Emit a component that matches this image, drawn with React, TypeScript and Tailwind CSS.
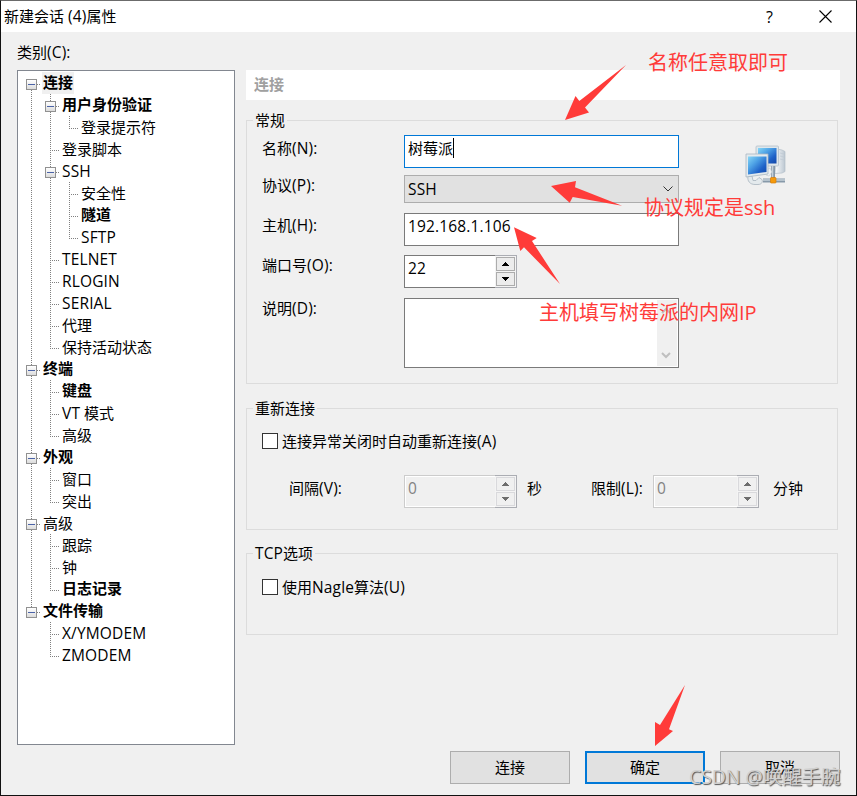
import type { ReactNode } from "react";

type Node = { label: string; bold?: boolean; selected?: boolean; children?: Node[] };

const TREE: Node[] = [
  {
    label: "连接",
    bold: true,
    selected: true,
    children: [
      { label: "用户身份验证", bold: true, children: [{ label: "登录提示符" }] },
      { label: "登录脚本" },
      { label: "SSH", children: [{ label: "安全性" }, { label: "隧道", bold: true }, { label: "SFTP" }] },
      { label: "TELNET" },
      { label: "RLOGIN" },
      { label: "SERIAL" },
      { label: "代理" },
      { label: "保持活动状态" },
    ],
  },
  { label: "终端", bold: true, children: [{ label: "键盘", bold: true }, { label: "VT 模式" }, { label: "高级" }] },
  { label: "外观", bold: true, children: [{ label: "窗口" }, { label: "突出" }] },
  { label: "高级", children: [{ label: "跟踪" }, { label: "钟" }, { label: "日志记录", bold: true }] },
  { label: "文件传输", bold: true, children: [{ label: "X/YMODEM" }, { label: "ZMODEM" }] },
];

type Row = { node: Node; depth: number; last: boolean; first: boolean; rails: boolean[] };

function flatten(nodes: Node[], depth = 0, rails: boolean[] = []): Row[] {
  return nodes.flatMap((node, i) => {
    const last = i === nodes.length - 1;
    const row: Row = { node, depth, last, first: depth === 0 && i === 0, rails };
    return [row, ...flatten(node.children ?? [], depth + 1, [...rails, !last])];
  });
}

/** Sets Latin runs slightly larger while leaving Chinese runs at their natural pitch. */
function Mixed({ children }: { children: string }) {
  return (
    <>
      {children.split(/([\x21-\x7e]+)/).map((run, i) =>
        i % 2 ? (
          <span key={i} className="text-[15.500px] tracking-[.15px]">
            {run}
          </span>
        ) : (
          run
        ),
      )}
    </>
  );
}

function Guides({ row }: { row: Row }) {
  const x = 13.5 + 19 * row.depth;
  const width = 24 + 19 * row.depth;
  return (
    <svg className="shrink-0" width={width} height="22" shapeRendering="crispEdges">
      <defs>
        <linearGradient id="tog" x1="0" y1="0" x2="0" y2="1">
          <stop offset="0" stopColor="#fff" />
          <stop offset="1" stopColor="#dcdcdc" />
        </linearGradient>
      </defs>
      <g stroke="#808080" strokeDasharray="1 1">
        {row.rails.map((on, k) => on && <path key={k} d={`M${13.5 + 19 * k} 0V22`} />)}
        <path d={`M${x} ${row.first ? 12 : 0}V${row.last ? 13 : 22}`} />
        <path d={`M${x - 0.5} 12.5H${width - 1}`} />
      </g>
      {row.node.children && (
        <g>
          <rect x={x - 5.5} y="7" width="11" height="11" rx="1" fill="#919191" />
          <rect x={x - 4.5} y="8" width="9" height="9" fill="url(#tog)" />
          <path d={`M${x - 3.5} 12.5h7`} stroke="#4b63a7" />
        </g>
      )}
    </svg>
  );
}

function Group({ title, className, children }: { title: string; className: string; children: ReactNode }) {
  return (
    <section className={`w-[592px] border border-[#dcdcdc] ${className}`}>
      <div className="-mt-[11px] ml-1.5 h-5 w-fit bg-[#f0f0f0] px-0.5 leading-5">
        <Mixed>{title}</Mixed>
      </div>
      {children}
    </section>
  );
}

function Spinner({ value, width, disabled }: { value: string; width: string; disabled?: boolean }) {
  const btn = disabled ? "border-[#d9d9dc] bg-[#f0f0f0]" : "border-[#acacac] bg-[#ececec]";
  const fill = disabled ? "#6d6d6d" : "#000";
  return (
    <div className={`flex h-[33px] ${width}`}>
      <div
        className={`flex-1 border border-r-0 pl-[3px] leading-6 ${
          disabled ? "border-[#cccccc] bg-[#f0f0f0] text-[#838383] shadow-[inset_1px_1px_0_#fff,inset_0_-1px_0_#fff]" : "border-[#7a7a7a] bg-white"
        }`}
      >
        <Mixed>{value}</Mixed>
      </div>
      <div className="flex w-[22px] flex-col gap-px border border-l-0 border-[#abadb3] bg-[#f4f4f4] py-px pr-px pl-px">
        <div className={`flex h-[14px] items-center justify-center border ${btn}`}>
          <svg width="7" height="4" shapeRendering="crispEdges">
            <path d="M3 0h1v1h1v1h1v1h1v1H0V3h1V2h1V1h1z" fill={fill} />
          </svg>
        </div>
        <div className={`flex h-[14px] items-center justify-center border ${btn}`}>
          <svg width="7" height="4" shapeRendering="crispEdges">
            <path d="M0 0h7v1H6v1H5v1H4v1H3V3H2V2H1V1H0z" fill={fill} />
          </svg>
        </div>
      </div>
    </div>
  );
}

function Field({ label, className, pad, children }: { label: string; className: string; pad: string; children: ReactNode }) {
  return (
    <div className={`flex items-start ${className}`}>
      <div className={`w-[142px] ${pad}`}>
        <Mixed>{label}</Mixed>
      </div>
      {children}
    </div>
  );
}

function Check({ children }: { children: string }) {
  return (
    <div className="flex h-4 items-center gap-1 pl-[15px]">
      <span className="size-4 border border-[#333] bg-white" />
      <span className="leading-5">
        <Mixed>{children}</Mixed>
      </span>
    </div>
  );
}

function NetworkIcon() {
  return (
    <svg width="42" height="42" viewBox="0 0 42 42">
      <defs>
        <linearGradient id="scr" x1="0" y1="0" x2="1" y2="1">
          <stop offset="0" stopColor="#86d6f5" />
          <stop offset=".35" stopColor="#4fa3e6" />
          <stop offset=".7" stopColor="#1f62c8" />
          <stop offset="1" stopColor="#1247a8" />
        </linearGradient>
        <linearGradient id="tower" x1="0" y1="0" x2="1" y2="0">
          <stop offset="0" stopColor="#fbfcfd" />
          <stop offset="1" stopColor="#bcc7d1" />
        </linearGradient>
      </defs>
      <path d="M32 4l5 1 3 1.500v20l-3 1.500-7 .5z" fill="url(#tower)" stroke="#b3bec8" strokeWidth=".7" />
      <path d="M35 8l4 1M35 11l4 1M35 14l4 1" stroke="#c0cad3" strokeWidth=".8" />
      <rect x="11" y="1" width="22.500" height="20" rx="1" fill="#dfe7ec" stroke="#b3bfc9" strokeWidth=".8" />
      <rect x="13" y="3" width="18.500" height="15.500" fill="url(#scr)" />
      <path d="M3 31c-1 5 2 8.500 7 8.500h3c4 0 5-3 4-5l-3-2-3 3H8l-1-4.500z" fill="#e4eaed" stroke="#a8b4be" strokeWidth=".8" />
      <path d="M18 35.500h22M28 21v14" stroke="#8799a9" strokeWidth="4" />
      <path d="M18 35h22M27.500 21v13" stroke="#c6d1d9" strokeWidth="1.600" />
      <path d="M21 25l4-2 2 4-3 4-3-1z" fill="#edf1f3" stroke="#b6c1ca" strokeWidth=".5" />
      <path d="M1 9h22v20L1 32z" fill="#e3eaee" stroke="#a9b6c1" strokeWidth=".8" />
      <path d="M3 11.500h18.500v15.500L3 29.500z" fill="url(#scr)" />
      <rect x="25.500" y="32.500" width="5.500" height="5.500" rx=".8" fill="#f59a0b" stroke="#d57b08" strokeWidth=".7" />
    </svg>
  );
}

export default function App() {
  return (
    <div className="relative flex h-[796px] w-[857px] flex-col overflow-hidden border border-[#111] border-t-[#6b6b6b] bg-[#f0f0f0] font-['Open_Sans','Noto_Sans_CJK_SC',sans-serif] text-[15px] text-black">
      <header className="flex h-[31px] shrink-0 items-center bg-white pl-[3px]">
        <span className="flex-1">
          <Mixed>新建会话 (4)属性</Mixed>
        </span>
        <span className="mr-[46px] text-[16px]">?</span>
        <svg className="mr-[24px]" width="13" height="13">
          <path d="M.5.5l12 12M12.500.5l-12 12" stroke="#000" strokeWidth="1.100" />
        </svg>
      </header>

      <div className="flex h-[713px] shrink-0 pl-4">
        <aside className="w-[218px]">
          <div className="h-[38px] pt-2.5 leading-5">
            <Mixed>类别(C):</Mixed>
          </div>
          <div className="h-[675px] border border-[#828790] bg-white pt-px">
            {flatten(TREE).map((row, i) => (
              <div key={i} className="flex h-[22px]">
                <Guides row={row} />
                <span
                  className={`h-[22px] px-px whitespace-nowrap ${row.node.bold ? "font-bold" : ""} ${
                    row.node.selected ? "bg-[#f0f0f0] leading-5" : row.node.bold ? "leading-[21px]" : "leading-[22px]"
                  }`}
                >
                  <Mixed>{row.node.label}</Mixed>
                </span>
              </div>
            ))}
          </div>
        </aside>

        <main className="ml-[11px] w-[594px] pt-[38px]">
          <div className="h-[30px] bg-white pl-2 leading-[29px] font-bold text-[#a0a0a0]">连接</div>

          <Group title="常规" className="mt-5 h-[264px]">
            <div className="flex">
              <div className="pl-[15px] leading-5">
                <Field label="名称(N):" className="mt-[5px]" pad="pt-[3px]">
                  <div className="flex h-[33px] w-[275px] border border-[#0078d7] bg-white pt-0.5 pl-[3px]">
                    树莓派
                    <span className="h-5 w-px bg-black" />
                  </div>
                </Field>
                <Field label="协议(P):" className="mt-[7px]" pad="pt-0">
                  <div className="flex h-7 w-[275px] items-center justify-between border border-[#adadad] bg-[#e1e1e1] pr-[5px] pl-[3px]">
                    <span>
                      <Mixed>SSH</Mixed>
                    </span>
                    <svg width="10" height="6">
                      <path d="M.5.5L5 5 9.500.5" fill="none" stroke="#333" />
                    </svg>
                  </div>
                </Field>
                <Field label="主机(H):" className="mt-2.5" pad="pt-0.5">
                  <div className="h-[33px] w-[275px] border border-[#7a7a7a] bg-white pl-[3px] leading-6">
                    <Mixed>192.168.1.106</Mixed>
                  </div>
                </Field>
                <Field label="端口号(O):" className="mt-[9px]" pad="pt-0">
                  <Spinner value="22" width="w-[113px]" />
                </Field>
                <Field label="说明(D):" className="mt-2.5" pad="pt-0">
                  <div className="flex h-[70px] w-[275px] justify-end border border-[#7a7a7a] bg-white p-px">
                    <div className="flex w-5 flex-col items-center justify-between bg-[#f0f0f0] py-[7px] pr-0.5">
                      <svg width="10" height="7">
                        <path d="M1 6l4-4 4 4" fill="none" stroke="#bfbfbf" strokeWidth="2" />
                      </svg>
                      <svg width="10" height="7">
                        <path d="M1 1l4 4 4-4" fill="none" stroke="#bfbfbf" strokeWidth="2" />
                      </svg>
                    </div>
                  </div>
                </Field>
              </div>
              <div className="mt-[15px] ml-[66px]">
                <NetworkIcon />
              </div>
            </div>
          </Group>

          <Group title="重新连接" className="mt-6 h-[122px]">
            <div className="h-[15px]" />
            <Check>连接异常关闭时自动重新连接(A)</Check>
            <div className="mt-[26px] flex items-start pl-[42px] leading-5">
              <span className="w-[115px] pt-[3px]">
                <Mixed>间隔(V):</Mixed>
              </span>
              <Spinner value="0" width="w-[113px]" disabled />
              <span className="w-16 pt-[3px] pl-2.5">秒</span>
              <span className="w-[72px] pt-[3px] pl-2.5">
                <Mixed>限制(L):</Mixed>
              </span>
              <Spinner value="0" width="w-[106px]" disabled />
              <span className="pt-[3px] pl-[14px]">分钟</span>
            </div>
          </Group>

          <Group title="TCP选项" className="mt-[23px] h-[82px]">
            <div className="h-4" />
            <Check>使用Nagle算法(U)</Check>
          </Group>
        </main>
      </div>

      <footer className="mt-[6px] flex gap-[15px] pl-[449px]">
        <button className="h-[33px] w-[120px] border border-[#adadad] bg-[#e1e1e1]">连接</button>
        <button className="h-[33px] w-[120px] border-2 border-[#0078d7] bg-[#e1e1e1]">确定</button>
        <button className="h-[33px] w-[120px] border border-[#adadad] bg-[#e1e1e1]">取消</button>
      </footer>

      <svg className="absolute -top-px -left-px" width="857" height="796" fill="#ff3b39">
        <path d="M626 65L579.300 101l-3.800-5L565 120l24-7.500-4-5z" />
        <path d="M551 186l25-5-1 6.300L622 205.700 572.700 197l-3 5.700z" />
        <path d="M514 227.300L536.700 238 532 241l28 43-36-36.700-3.700 3.700z" />
        <path d="M685 685l-25 40-5-3v24l18-15-4-1.700z" />
      </svg>
      <div className="absolute top-[48px] left-[647px] text-[20px] leading-7 whitespace-nowrap text-[#ff3b39]">名称任意取即可</div>
      <div className="absolute top-[193px] left-[643px] text-[20px] leading-7 whitespace-nowrap text-[#ff3b39]">协议规定是ssh</div>
      <div className="absolute top-[298px] left-[538px] text-[20px] leading-7 whitespace-nowrap text-[#ff3b39]">主机填写树莓派的内网IP</div>
      <div className="absolute top-[762px] left-[688px] text-[19.500px] leading-7 tracking-[-.1px] whitespace-nowrap text-[#d0d0d0] [text-shadow:1px_1px_1px_#555]">
        CSDN @唤醒手腕
      </div>
    </div>
  );
}
